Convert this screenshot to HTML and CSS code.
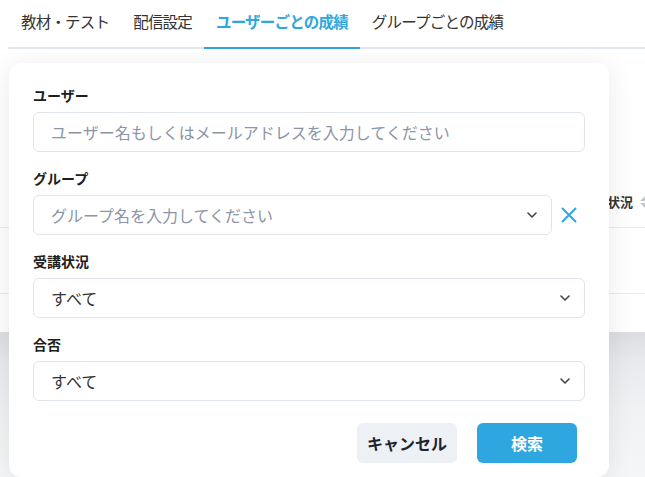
FILE: index.html
```html
<!DOCTYPE html>
<html lang="ja">
<head>
<meta charset="utf-8">
<title>ユーザーごとの成績</title>
<link rel="stylesheet" href="styles.css">
</head>
<body>
<div class="page">
  <nav class="tabs">
    <a class="tab">教材・テスト</a>
    <a class="tab">配信設定</a>
    <a class="tab active">ユーザーごとの成績</a>
    <a class="tab">グループごとの成績</a>
  </nav>
  <section class="card">
    <div class="table-head">
      <div class="th">受講状況
        <svg class="sort" width="12" height="14" viewBox="0 0 12 14"><path d="M6 1 L11 6 H1 Z M6 13 L11 8 H1 Z" fill="#c3c7cd"/></svg>
      </div>
    </div>
    <div class="table-row"></div>
  </section>
  <div class="below"></div>

  <div class="panel">
    <div class="field">
      <label class="label">ユーザー</label>
      <input class="input" type="text" placeholder="ユーザー名もしくはメールアドレスを入力してください">
    </div>
    <div class="field">
      <label class="label">グループ</label>
      <div class="row">
        <div class="select">
          <span class="placeholder">グループ名を入力してください</span>
          <svg class="chev" width="10" height="6" viewBox="0 0 10 6"><path d="M1 1 L5 5 L9 1" fill="none" stroke="#444" stroke-width="1.6" stroke-linecap="round" stroke-linejoin="round"/></svg>
        </div>
        <button class="clear" aria-label="クリア">
          <svg width="16" height="16" viewBox="0 0 16 16"><path d="M1.5 1.5 L14.5 14.5 M14.5 1.5 L1.5 14.5" stroke="#2ea7e0" stroke-width="2" stroke-linecap="round"/></svg>
        </button>
      </div>
    </div>
    <div class="field">
      <label class="label">受講状況</label>
      <div class="select">
        <span class="value">すべて</span>
        <svg class="chev" width="10" height="6" viewBox="0 0 10 6"><path d="M1 1 L5 5 L9 1" fill="none" stroke="#444" stroke-width="1.6" stroke-linecap="round" stroke-linejoin="round"/></svg>
      </div>
    </div>
    <div class="field">
      <label class="label">合否</label>
      <div class="select">
        <span class="value">すべて</span>
        <svg class="chev" width="10" height="6" viewBox="0 0 10 6"><path d="M1 1 L5 5 L9 1" fill="none" stroke="#444" stroke-width="1.6" stroke-linecap="round" stroke-linejoin="round"/></svg>
      </div>
    </div>
    <div class="actions">
      <button class="btn cancel">キャンセル</button>
      <button class="btn search">検索</button>
    </div>
  </div>
</div>
</body>
</html>
```

FILE: styles.css
```css
* { box-sizing: border-box; }
html, body { margin: 0; padding: 0; }
body {
  font-family: "Noto Sans CJK JP", "Noto Sans", sans-serif;
  color: #333;
  background: #fff;
  width: 645px;
  height: 477px;
  overflow: hidden;
}
.page {
  position: relative;
  height: 477px;
  display: flex;
  flex-direction: column;
}
.tabs {
  display: flex;
  margin-left: 8px;
  padding-left: 1px;
  border-bottom: 2px solid #e3e8ef;
  height: 49px;
  flex: none;
}
.tab {
  padding: 8px 12px 0;
  height: 49px;
  font-size: 15.5px;
  line-height: 26px;
  color: #333;
  letter-spacing: -0.8px;
  white-space: nowrap;
}
.tab.active {
  color: #2ea7e0;
  font-weight: 700;
  border-bottom: 2px solid #2ea7e0;
}
.card {
  height: 283px;
  flex: none;
  background: #fff;
  display: flex;
  flex-direction: column;
  padding-top: 127px;
}
.table-head {
  height: 52px;
  border-bottom: 1px solid #e8ecf1;
  display: flex;
  justify-content: flex-end;
  align-items: center;
}
.th {
  font-size: 13px;
  font-weight: 700;
  color: #333;
  display: flex;
  align-items: center;
  gap: 6px;
  margin-right: -6px;
}
.table-row {
  height: 66px;
  border-bottom: 1px solid #e8ecf1;
}
.below {
  flex: 1;
  background: linear-gradient(to bottom, #dcdde0 0, #e9eaed 30px, #f1f2f4 80px, #f5f6f8 140px);
}
.panel {
  position: absolute;
  top: 63px;
  left: 9px;
  width: 600px;
  background: #fff;
  border-radius: 12px;
  box-shadow: 0 4px 28px rgba(0, 0, 0, 0.09);
  padding: 23px 24px 14px;
  display: flex;
  flex-direction: column;
  gap: 17px;
}
.field {
  display: flex;
  flex-direction: column;
  gap: 8px;
}
.label {
  font-size: 14px;
  font-weight: 700;
  line-height: 18px;
  color: #1e1e1e;
}
.input, .select {
  height: 40px;
  border: 1px solid #e0e5ec;
  border-radius: 6px;
  background: #fff;
  font-family: inherit;
  font-size: 16px;
  padding: 0 17px;
  color: #333;
}
.input::placeholder { color: #8c95a6; }
.input { width: 100%; outline: none; }
.select {
  display: flex;
  align-items: center;
  justify-content: space-between;
  padding-right: 14px;
}
.placeholder { color: #8c95a6; }
.value { color: #333; }
.row {
  display: flex;
  align-items: center;
}
.row .select { flex: 1; }
.clear {
  width: 33px;
  height: 40px;
  border: 0;
  background: none;
  padding: 0 0 0 9px;
  display: flex;
  align-items: center;
}
.actions {
  display: flex;
  justify-content: flex-end;
  gap: 20px;
  margin-top: 5px;
  padding-right: 8px;
}
.btn {
  width: 100px;
  height: 40px;
  border: 0;
  border-radius: 6px;
  font-family: inherit;
  font-size: 16px;
  font-weight: 700;
}
.cancel { background: #edf1f5; color: #1f2530; }
.search { background: #2ea7e0; color: #fff; }
```
